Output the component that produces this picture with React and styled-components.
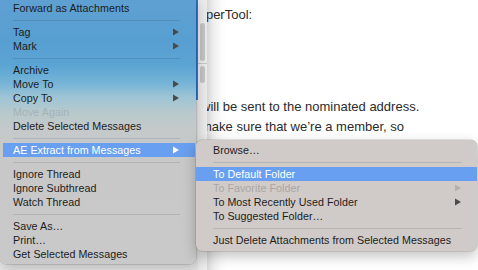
import React from "react";
import styled, { createGlobalStyle } from "styled-components";

const Global = createGlobalStyle`
  html, body { margin: 0; padding: 0; background: #ffffff; overflow: hidden; }
  * { box-sizing: border-box; }
`;

const Screen = styled.div`
  position: relative;
  width: 478px;
  height: 270px;
  overflow: hidden;
  display: flex;
  font-family: "Liberation Sans", Arial, sans-serif;
  background: #ffffff;
`;

const LeftPane = styled.div`
  width: 198px;
  flex: none;
  background: #e7e7e7;
  display: flex;
  justify-content: flex-end;
`;

const SelectionEdge = styled.div`
  width: 2px;
  height: 100px;
  background: #2f7be0;
`;

const ScrollColumn = styled.div`
  width: 9px;
  flex: none;
  background: #eeeeee;
  display: flex;
  flex-direction: column;
  align-items: center;
  padding-top: 23px;
`;

const Thumb = styled.div`
  width: 5px;
  height: ${(p) => p.$h}px;
  border-radius: 3px;
  background: #c6c6c6;
`;

const PaneDivider = styled.div`
  align-self: stretch;
  height: 1px;
  background: #c9c9c9;
  margin: 2px -2px 2px 0;
`;

const Document = styled.div`
  flex: 1;
  overflow: hidden;
  background: linear-gradient(to right, #d9d9d9 0px, #efefef 7px, #fbfbfb 14px, #ffffff 20px);
  color: #2b2b2b;
  font-size: 13px;
  line-height: 20px;
`;

const DocContent = styled.div`
  margin-left: -6px;
  margin-top: -18px;
  white-space: nowrap;
`;

const Line = styled.div`
  margin-left: ${(p) => p.$shift || 0}px;
  margin-bottom: ${(p) => p.$gap || 0}px;
`;

const MainMenu = styled.div`
  position: absolute;
  left: 0;
  top: -5px;
  width: 196px;
  padding: 6px 0 3px;
  border-radius: 6px;
  background: linear-gradient(
    to bottom,
    #5fa0d1 0px,
    #589fd1 45px,
    #5aa4d3 70px,
    #76b4d7 88px,
    #9fc5d5 103px,
    #b9c9cc 118px,
    #c5c9ca 135px,
    #c8c8c8 170px,
    #c9c9c9 100%
  );
  box-shadow: 0 0 0 0.5px rgba(0, 0, 0, 0.2), 2px 4px 14px rgba(0, 0, 0, 0.22);
  font-size: 10.7px;
  z-index: 2;
`;

const SubMenu = styled.div`
  position: absolute;
  left: 196px;
  top: 140px;
  width: 281px;
  padding: 3px 0 4px;
  border-radius: 6px;
  background: #d0cbc8;
  box-shadow: 0 0 0 0.5px rgba(0, 0, 0, 0.18), 0 5px 14px rgba(0, 0, 0, 0.25);
  font-size: 10.7px;
  z-index: 3;
`;

const Item = styled.div`
  height: 14px;
  display: flex;
  align-items: center;
  justify-content: space-between;
  margin: ${(p) => (p.$main ? "0 1px 0 3px" : "0")};
  padding: ${(p) => (p.$main ? "0 16px 0 10px" : "0 16px 0 17px")};
  color: ${(p) =>
    p.$active ? "#ffffff" : p.$disabled ? (p.$main ? "#a6b1b7" : "#a9a6a4") : "#1c1c1c"};
  background: ${(p) => (p.$active ? "#699ff0" : "transparent")};
  white-space: nowrap;
  letter-spacing: 0.05px;
`;

const Separator = styled.div`
  height: 10px;
  display: flex;
  align-items: center;
  padding: ${(p) => (p.$main ? "0 16px 0 13px" : "0 15px 0 17px")};
  &::after {
    content: "";
    flex: 1;
    height: 1px;
    background: ${(p) => (p.$main ? "rgba(0, 0, 0, 0.1)" : "#b8b4b1")};
  }
`;

const Arrow = ({ color }) => (
  <svg width="6" height="8" viewBox="0 0 6 8">
    <polygon points="0,0.5 6,4 0,7.5" fill={color} />
  </svg>
);

const mainItems = [
  { label: "Forward as Attachments" },
  "sep",
  { label: "Tag", sub: true },
  { label: "Mark", sub: true },
  "sep",
  { label: "Archive" },
  { label: "Move To", sub: true },
  { label: "Copy To", sub: true },
  { label: "Move Again", disabled: true },
  { label: "Delete Selected Messages" },
  "sep",
  { label: "AE Extract from Messages", sub: true, active: true },
  "sep",
  { label: "Ignore Thread" },
  { label: "Ignore Subthread" },
  { label: "Watch Thread" },
  "sep",
  { label: "Save As…" },
  { label: "Print…" },
  { label: "Get Selected Messages" },
];

const subItems = [
  { label: "Browse…" },
  "sep",
  { label: "To Default Folder", active: true },
  { label: "To Favorite Folder", sub: true, disabled: true },
  { label: "To Most Recently Used Folder", sub: true },
  { label: "To Suggested Folder…" },
  "sep",
  { label: "Just Delete Attachments from Selected Messages" },
];

function MenuList({ items, main }) {
  return items.map((it, i) =>
    it === "sep" ? (
      <Separator key={i} $main={main} />
    ) : (
      <Item key={i} $main={main} $active={it.active} $disabled={it.disabled}>
        <span>{it.label}</span>
        {it.sub && (
          <Arrow
            color={it.active ? "#ffffff" : it.disabled ? "#b3b0ae" : "#4a4a4a"}
          />
        )}
      </Item>
    )
  );
}

export default function App() {
  return (
    <>
      <Global />
      <Screen>
        <LeftPane>
          <SelectionEdge />
        </LeftPane>
        <ScrollColumn>
          <Thumb $h={38} />
          <PaneDivider />
          <Thumb $h={17} />
        </ScrollColumn>
        <Document>
          <DocContent>
            <Line $gap={3}>members can simply reply by</Line>
            <Line $shift={-11} $gap={72}>SuperTool:</Line>
            <Line>will be sent to the nominated address.</Line>
            <Line>make sure that we’re a member, so</Line>
          </DocContent>
        </Document>
        <MainMenu>
          <MenuList items={mainItems} main />
        </MainMenu>
        <SubMenu>
          <MenuList items={subItems} />
        </SubMenu>
      </Screen>
    </>
  );
}
